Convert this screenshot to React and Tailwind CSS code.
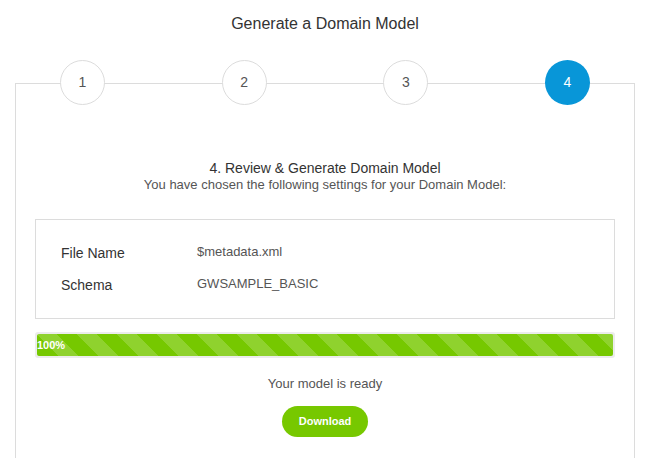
export default function App() {
  const steps = [1, 2, 3, 4];
  return (
    <div className="w-[650px] bg-white font-['Liberation_Sans',Arial,sans-serif] text-[#333]">
      <div className="pt-[14px] text-center text-[16px] leading-[20px] text-[#333]">
        Generate a Domain Model
      </div>
      <div className="mx-[15px] mt-[49px] border border-[#dcdcdc] pb-[60px]">
        <div className="-mt-[24px] flex justify-between px-[44px]">
          {steps.map((s) => (
            <div
              key={s}
              className={
                s === 4
                  ? "flex h-[45px] w-[45px] items-center justify-center rounded-full bg-[#0896d8] text-[14px] text-white"
                  : "flex h-[45px] w-[45px] items-center justify-center rounded-full border border-[#dcdcdc] bg-white text-[14px] text-[#555]"
              }
            >
              {s}
            </div>
          ))}
        </div>
        <div className="mt-[55px] text-center">
          <div className="text-[14px] leading-[17px] text-[#333]">
            4. Review &amp; Generate Domain Model
          </div>
          <div className="text-[13px] leading-[16px] text-[#555]">
            You have chosen the following settings for your Domain Model:
          </div>
        </div>
        <div className="mx-[19px] mt-[26px] border border-[#dcdcdc] px-[25px] py-[17px]">
          <div className="flex h-[32px] items-center">
            <div className="w-[136px] text-[14px] text-[#333]">File Name</div>
            <div className="pb-[3px] text-[13px] text-[#555]">$metadata.xml</div>
          </div>
          <div className="flex h-[32px] items-center">
            <div className="w-[136px] text-[14px] text-[#333]">Schema</div>
            <div className="pb-[3px] text-[13px] text-[#555]">GWSAMPLE_BASIC</div>
          </div>
        </div>
        <div className="mx-[19px] mt-[13px] rounded-[3px] bg-[#ececec] p-[2px]">
          <div className="flex h-[22px] items-center rounded-[2px] bg-[#76c800] bg-[linear-gradient(45deg,rgba(255,255,255,.18)_25%,transparent_25%,transparent_50%,rgba(255,255,255,.18)_50%,rgba(255,255,255,.18)_75%,transparent_75%,transparent)] bg-[length:40px_40px] text-[11px] font-bold text-white">
            100%
          </div>
        </div>
        <div className="mt-[18px] text-center text-[13px] leading-[16px] text-[#555]">
          Your model is ready
        </div>
        <div className="mt-[14px] flex justify-center">
          <button className="h-[31px] w-[86px] rounded-full bg-[#77c800] text-[11px] font-bold text-white">
            Download
          </button>
        </div>
      </div>
    </div>
  );
}
